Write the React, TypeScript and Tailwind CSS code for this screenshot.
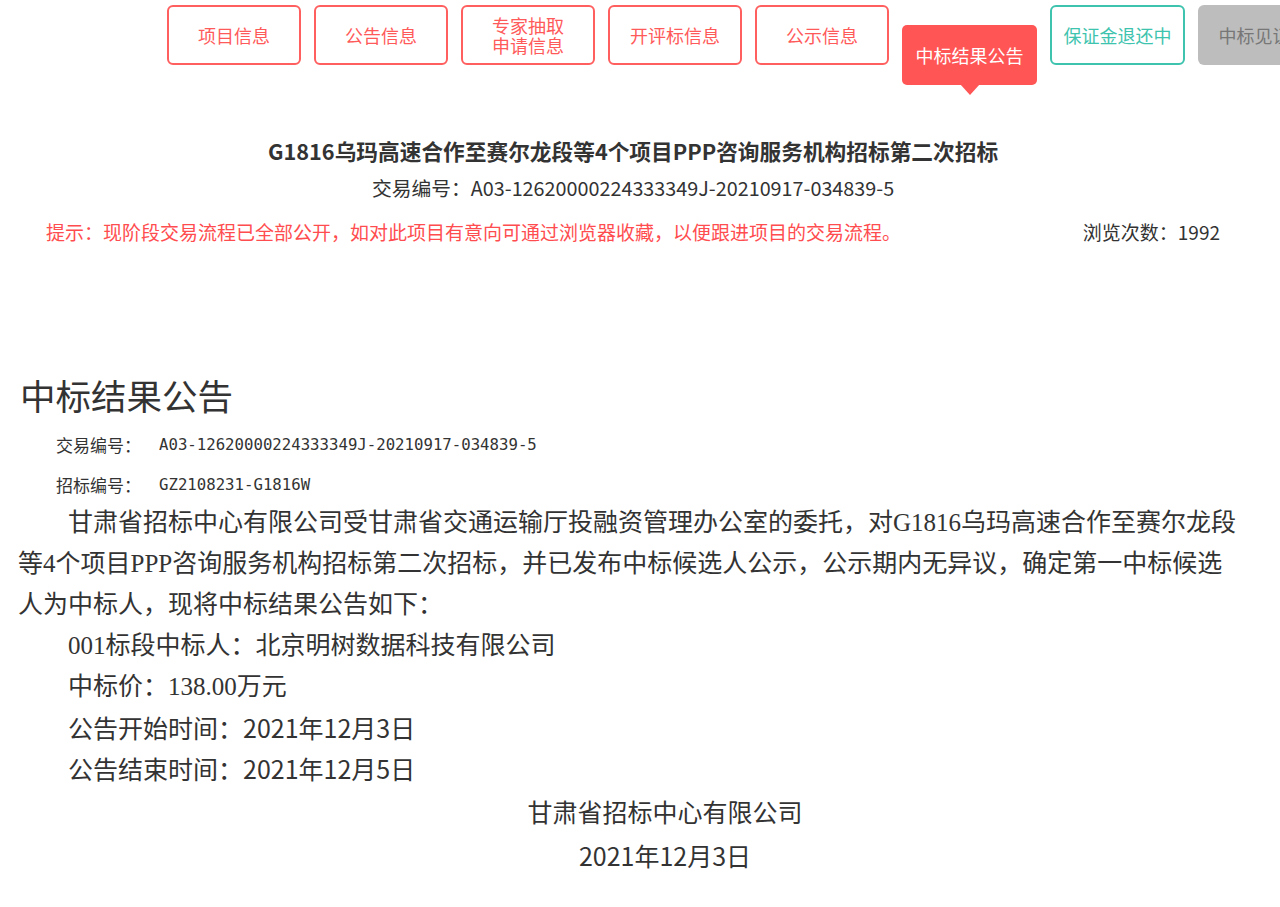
import React from 'react'

const sans = "font-['Noto_Sans_CJK_SC','Noto_Sans',sans-serif]"
const serif = "font-['Liberation_Serif','Noto_Sans_CJK_SC',serif]"

const tabs = [
  { label: '项目信息' },
  { label: '公告信息' },
  { label: '专家抽取', label2: '申请信息' },
  { label: '开评标信息' },
  { label: '公示信息' },
]

const App: React.FC = () => {
  return (
    <div className={`w-[1280px] min-h-[907px] overflow-hidden bg-white text-[#333] ${sans}`}>
      {/* Tabs */}
      <div className="flex items-start gap-[13px] pl-[167px] pt-[5px] w-[1400px]">
        {tabs.map((t) => (
          <div
            key={t.label}
            className="w-[134px] h-[60px] shrink-0 rounded-[6px] border-2 border-[#ff5f5f] flex items-center justify-center text-center text-[18px] leading-[20px] text-[#ff5a5a]"
          >
            <span>
              {t.label}
              {t.label2 && <br />}
              {t.label2}
            </span>
          </div>
        ))}
        <div className="relative mt-[20px] w-[135px] h-[60px] shrink-0 rounded-[5px] bg-[#ff5555] flex items-center justify-center text-[18px] text-white">
          中标结果公告
          <div className="absolute left-1/2 -translate-x-1/2 top-[59px] w-0 h-0 border-l-[10px] border-r-[10px] border-t-[11px] border-l-transparent border-r-transparent border-t-[#ff5555]" />
        </div>
        <div className="w-[135px] h-[60px] shrink-0 rounded-[6px] border-2 border-[#3ec3ae] flex items-center justify-center text-[18px] text-[#3ec3ae]">
          保证金退还中
        </div>
        <div className="w-[135px] h-[60px] shrink-0 rounded-[6px] bg-[#bdbdbd] flex items-center justify-center pr-[4px] text-[18px] text-[#777]">
          中标见证书
        </div>
      </div>

      {/* Project header */}
      <div className="pr-[14px] text-center">
        <h1 className="mt-[51px] text-[21.7px] leading-[30px] font-bold text-[#333]">
          G1816乌玛高速合作至赛尔龙段等4个项目PPP咨询服务机构招标第二次招标
        </h1>
        <div className="mt-[7px] text-[19.8px] leading-[30px] text-[#333]">
          交易编号：A03-12620000224333349J-20210917-034839-5
        </div>
      </div>
      <div className="mt-[14px] flex justify-between pl-[46px] pr-[60px] text-[19px] leading-[30px]">
        <span className="text-[#ff4d4f]">
          提示：现阶段交易流程已全部公开，如对此项目有意向可通过浏览器收藏，以便跟进项目的交易流程。
        </span>
        <span className="text-[#333]">浏览次数：1992</span>
      </div>

      {/* Announcement */}
      <h2 className="mt-[123px] pl-[20px] text-[35.5px] leading-[50px] font-normal text-[#333]">中标结果公告</h2>
      <div className="mt-[8px] pl-[56px] flex items-center text-[17px] leading-[34px] text-[#333]">
        <span className="w-[103px]">交易编号：</span>
        <span className="font-['DejaVu_Sans_Mono',monospace] text-[15.7px]">A03-12620000224333349J-20210917-034839-5</span>
      </div>
      <div className="mt-[6px] pl-[56px] flex items-center text-[17px] leading-[34px] text-[#333]">
        <span className="w-[103px]">招标编号：</span>
        <span className="font-['DejaVu_Sans_Mono',monospace] text-[15.7px]">GZ2108231-G1816W</span>
      </div>

      <div className={`pl-[18px] text-[25px] leading-[41px] text-[#333] whitespace-nowrap ${serif}`}>
        <p className="pl-[50px]">甘肃省招标中心有限公司受甘肃省交通运输厅投融资管理办公室的委托，对G1816乌玛高速合作至赛尔龙段</p>
        <p>等4个项目PPP咨询服务机构招标第二次招标，并已发布中标候选人公示，公示期内无异议，确定第一中标候选</p>
        <p>人为中标人，现将中标结果公告如下：</p>
        <p className="pl-[50px]">001标段中标人：北京明树数据科技有限公司</p>
        <p className="pl-[50px]">中标价：138.00万元</p>
        <p className={`pl-[50px] ${sans}`}>公告开始时间：2021年12月3日</p>
        <p className={`pl-[50px] ${sans}`}>公告结束时间：2021年12月5日</p>
      </div>

      <div className="pl-[50px] text-center text-[25px] leading-[44px] text-[#333]">
        <p>甘肃省招标中心有限公司</p>
        <p>2021年12月3日</p>
      </div>
    </div>
  )
}

export default App
